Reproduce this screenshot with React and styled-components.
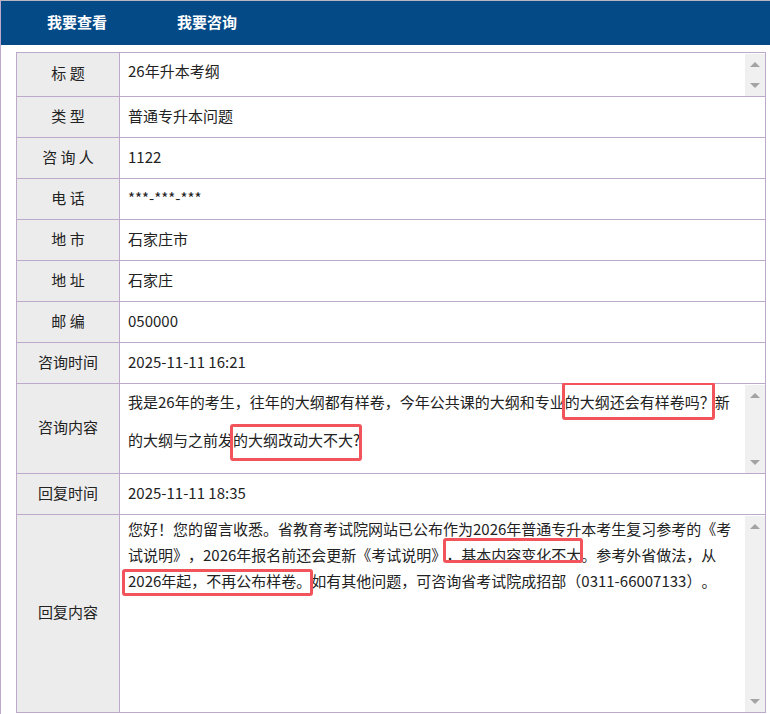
import React from "react";
import styled, { createGlobalStyle } from "styled-components";

const GlobalStyle = createGlobalStyle`
  html, body {
    margin: 0;
    padding: 0;
    background: #fff;
  }
  body {
    font-family: "Noto Sans CJK SC", "Noto Sans", sans-serif;
    color: #222;
    text-spacing-trim: space-all;
  }
`;

const LINE = "#bca9cb";

const rows = [
  { label: "类 型", value: "普通专升本问题" },
  { label: "咨 询 人", value: "1122" },
  { label: "电 话", value: "***-***-***" },
  { label: "地 市", value: "石家庄市" },
  { label: "地 址", value: "石家庄" },
  { label: "邮 编", value: "050000" },
  { label: "咨询时间", value: "2025-11-11 16:21" },
];

const Arrow = ({ down }) => (
  <svg width="10" height="5" viewBox="0 0 10 5">
    {down ? <polygon points="0,0 10,0 5,5" fill="#a3a3a3" /> : <polygon points="0,5 10,5 5,0" fill="#a3a3a3" />}
  </svg>
);

const FakeArea = ({ lineHeight, shift = 0, children }) => (
  <Area>
    <AreaText $lh={lineHeight} $shift={shift}>{children}</AreaText>
    <Scrollbar>
      <Arrow />
      <Arrow down />
    </Scrollbar>
  </Area>
);

const App = () => {
  return (
    <>
      <GlobalStyle />
      <Page>
        <Header>
          <Tab>我要查看</Tab>
          <Tab>我要咨询</Tab>
        </Header>
        <Table>
          <Row $h={44}>
            <Label>标 题</Label>
            <Value $area>
              <FakeArea lineHeight={38} shift={-2}>
                <Line>26年升本考纲</Line>
              </FakeArea>
            </Value>
          </Row>
          {rows.map((r) => (
            <Row key={r.label} $h={41}>
              <Label>{r.label}</Label>
              <Value>{r.value}</Value>
            </Row>
          ))}
          <Row $h={90}>
            <Label>咨询内容</Label>
            <Value $area>
              <FakeArea lineHeight={38} shift={-2}>
                <Line>
                  我是26年的考生，往年的大纲都有样卷，今年公共课的大纲和专业
                  <Mark $t={-9} $b={-8} $l={-3} $r={0}>的大纲还会有样卷吗？</Mark>新
                </Line>
                <Line>
                  的大纲与之前发<Mark $t={-5} $b={-11} $l={-3} $r={-2}>的大纲改动大不大?</Mark>
                </Line>
              </FakeArea>
            </Value>
          </Row>
          <Row $h={41}>
            <Label>回复时间</Label>
            <Value>2025-11-11 18:35</Value>
          </Row>
          <Row $h={198}>
            <Label>回复内容</Label>
            <Value $area>
              <FakeArea lineHeight={26}>
                <Line>您好！您的留言收悉。省教育考试院网站已公布作为2026年普通专升本考生复习参考的《考</Line>
                <Line>
                  试说明》，2026年报名前还会更新《考试说明》
                  <Mark $t={-6} $b={2} $l={-3} $r={-2}>，基本内容变化不大</Mark>。参考外省做法，从
                </Line>
                <Line>
                  <Mark $t={-1} $b={-5} $l={-6} $r={-2}>2026年起，不再公布样卷。</Mark>如有其他问题，可咨询省考试院成招部（0311-66007133）。
                </Line>
              </FakeArea>
            </Value>
          </Row>
        </Table>
      </Page>
    </>
  );
};

const Page = styled.div`
  width: 800px;
  height: 714px;
  box-sizing: border-box;
  border-left: 1px solid ${LINE};
  border-top: 1px solid #b8b4c4;
  overflow: hidden;
`;

const Header = styled.div`
  height: 44px;
  background: #044a87;
  display: flex;
  padding-left: 11px;
`;

const Tab = styled.div`
  width: 130px;
  line-height: 42px;
  text-align: center;
  color: #fff;
  font-size: 15px;
  font-weight: bold;
`;

const Table = styled.div`
  margin: 7px 0 0 15px;
  width: 750px;
  box-sizing: border-box;
  border-left: 1px solid ${LINE};
  border-top: 1px solid ${LINE};
  display: flex;
  flex-direction: column;
`;

const Row = styled.div`
  display: grid;
  grid-template-columns: 103px 1fr;
  height: ${(p) => p.$h}px;
  box-sizing: border-box;
  border-bottom: 1px solid ${LINE};
  font-size: 15px;
`;

const Label = styled.div`
  background: #ececec;
  border-right: 1px solid ${LINE};
  display: flex;
  align-items: center;
  justify-content: center;
  padding-bottom: 4px;
  box-sizing: border-box;
  color: #222;
  white-space: pre;
`;

const Value = styled.div`
  border-right: 1px solid ${LINE};
  display: flex;
  align-items: ${(p) => (p.$area ? "stretch" : "center")};
  padding: ${(p) => (p.$area ? "1px 0 0 0" : "0 0 4px 8px")};
  box-sizing: border-box;
  min-width: 0;
`;

const Area = styled.div`
  flex: 1;
  display: flex;
  min-width: 0;
`;

const AreaText = styled.div`
  flex: 1;
  padding-left: 8px;
  margin-top: ${(p) => p.$shift}px;
  line-height: ${(p) => p.$lh}px;
  overflow: hidden;
`;

const Line = styled.div`
  white-space: nowrap;
`;

const Scrollbar = styled.div`
  width: 20px;
  background: #f0f0f0;
  display: flex;
  flex-direction: column;
  align-items: center;
  justify-content: space-between;
  padding: 8px 0;
  box-sizing: border-box;
  svg {
    display: block;
  }
`;

const Mark = styled.span`
  position: relative;
  &::after {
    content: "";
    position: absolute;
    top: ${(p) => p.$t}px;
    bottom: ${(p) => p.$b}px;
    left: ${(p) => p.$l}px;
    right: ${(p) => p.$r}px;
    border: 3px solid #f2545b;
    border-radius: 3px;
    pointer-events: none;
  }
`;

export default App;
